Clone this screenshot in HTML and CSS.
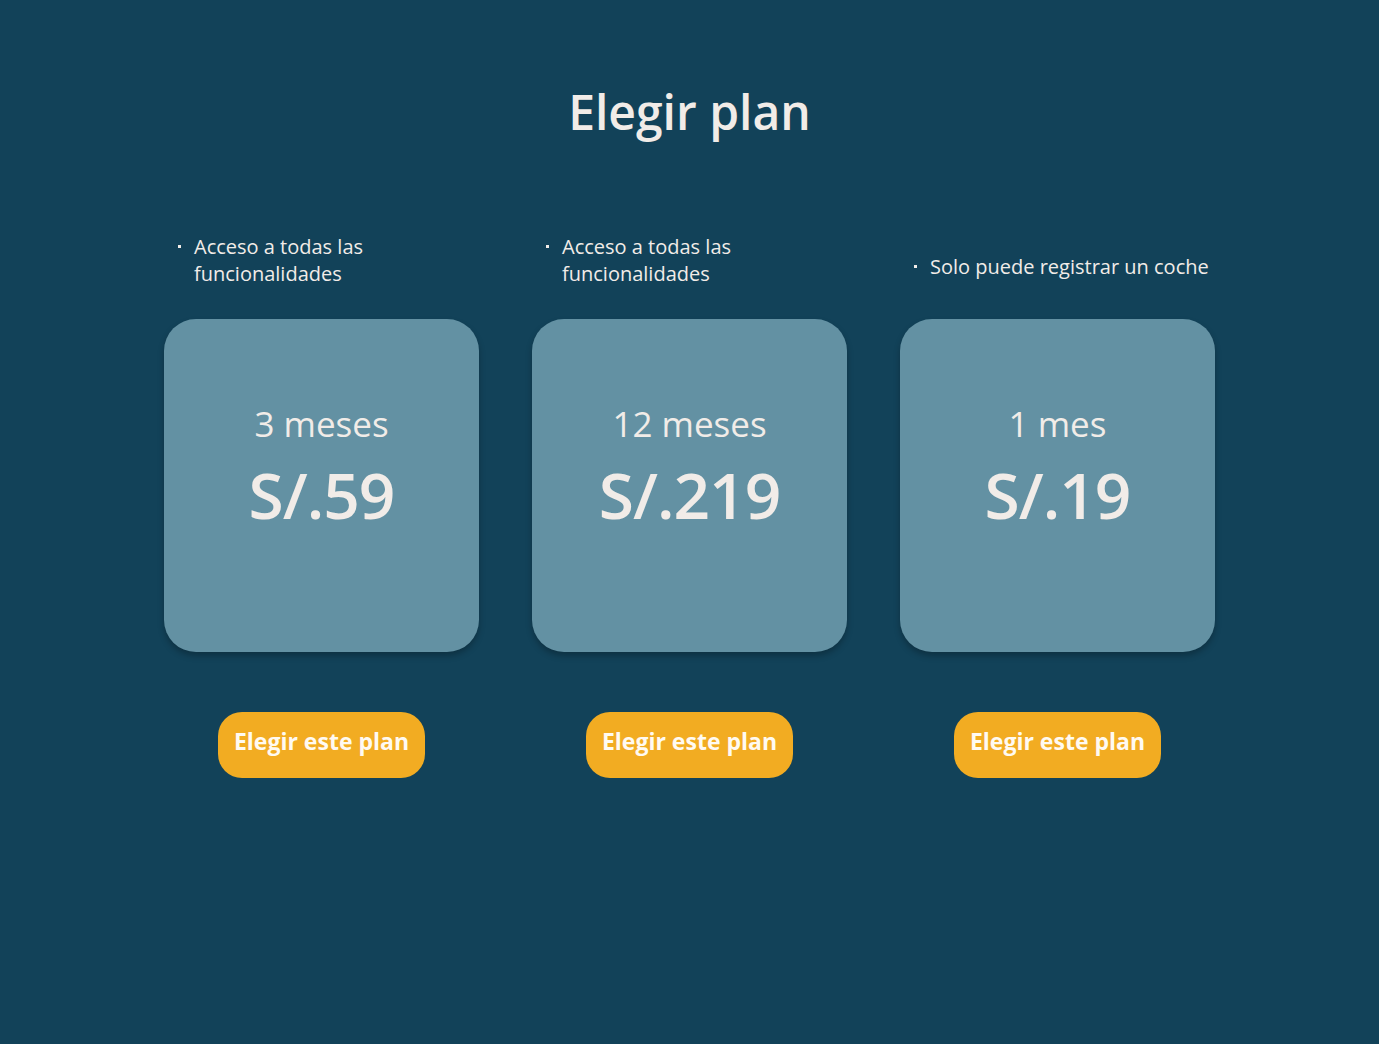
FILE: index.html
```html
<!DOCTYPE html>
<html lang="es">
<head>
<meta charset="utf-8">
<title>Elegir plan</title>
<link rel="stylesheet" href="styles.css">
</head>
<body>
<main class="page">
  <h1 class="title">Elegir plan</h1>
  <div class="plans">
    <section class="plan">
      <div class="features">
        <ul class="feature-list">
          <li>Acceso a todas las funcionalidades</li>
        </ul>
      </div>
      <div class="card">
        <p class="period">3 meses</p>
        <p class="price">S/.59</p>
      </div>
      <button class="choose">Elegir este plan</button>
    </section>
    <section class="plan">
      <div class="features">
        <ul class="feature-list">
          <li>Acceso a todas las funcionalidades</li>
        </ul>
      </div>
      <div class="card">
        <p class="period">12 meses</p>
        <p class="price">S/.219</p>
      </div>
      <button class="choose">Elegir este plan</button>
    </section>
    <section class="plan">
      <div class="features features-single">
        <ul class="feature-list feature-list-wide">
          <li>Solo puede registrar un coche</li>
        </ul>
      </div>
      <div class="card">
        <p class="period">1 mes</p>
        <p class="price">S/.19</p>
      </div>
      <button class="choose">Elegir este plan</button>
    </section>
  </div>
</main>
</body>
</html>
```
FILE: styles.css
```css
html, body {
  margin: 0;
  padding: 0;
}
body {
  background: #124259;
  color: #f1ece8;
  font-family: "Open Sans", "Noto Sans", sans-serif;
  min-height: 1044px;
}
.page {
  display: flex;
  flex-direction: column;
  align-items: center;
  padding-top: 80px;
}
.title {
  margin: 0;
  font-size: 48px;
  font-weight: 600;
  line-height: 64px;
  letter-spacing: 0;
}
.plans {
  display: flex;
  gap: 53px;
  margin-top: 80px;
}
.plan {
  width: 315px;
  display: flex;
  flex-direction: column;
  align-items: center;
}
.features {
  width: 315px;
  height: 71px;
  display: flex;
  align-items: center;
  box-sizing: border-box;
}
.features-single {
  padding-top: 13px;
}
.feature-list {
  margin: 0;
  padding: 0 0 0 30px;
  list-style: none;
  width: 220px;
  font-size: 20px;
  line-height: 27px;
}
.feature-list-wide {
  width: 300px;
}
.feature-list li {
  position: relative;
}
.feature-list li::before {
  content: "";
  position: absolute;
  left: -16px;
  top: 12px;
  width: 3px;
  height: 3px;
  background: #f1ece8;
}
.card {
  margin-top: 24px;
  width: 315px;
  height: 333px;
  border-radius: 32px;
  background: #6391a3;
  box-shadow: 0 4px 6px rgba(0, 0, 0, 0.25);
  display: flex;
  flex-direction: column;
  align-items: center;
  padding-top: 77px;
  box-sizing: border-box;
}
.period {
  margin: 0;
  font-size: 35px;
  line-height: 56px;
  font-weight: 500;
}
.price {
  margin: 2px 0 0;
  font-size: 64px;
  line-height: 82px;
  font-weight: 600;
  letter-spacing: -1px;
}
.choose {
  margin-top: 60px;
  width: 207px;
  height: 66px;
  padding: 0 0 8px;
  border: none;
  border-radius: 24px;
  background: #f2ac22;
  color: #fffaf2;
  font-family: inherit;
  font-size: 23px;
  font-weight: 700;
  cursor: pointer;
}
```
